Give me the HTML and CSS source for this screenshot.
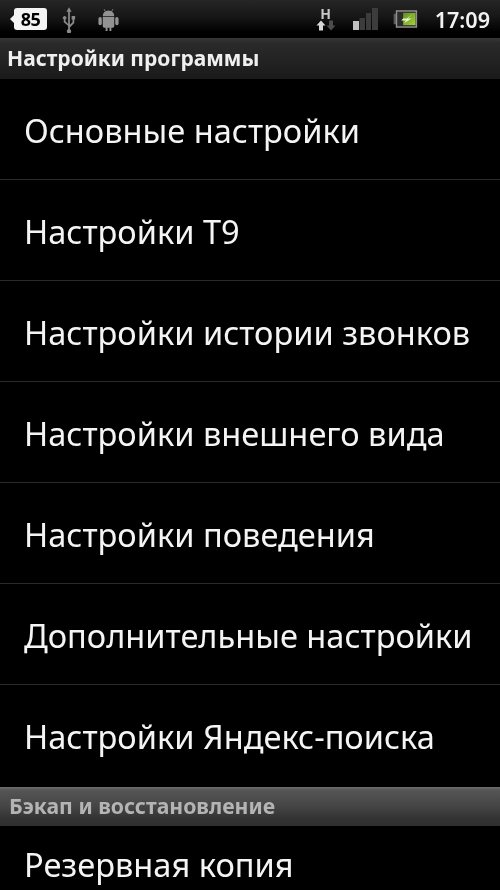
FILE: index.html
```html
<!DOCTYPE html>
<html lang="ru">
<head>
<meta charset="utf-8">
<title>Настройки программы</title>
<link rel="stylesheet" href="styles.css">
</head>
<body>
<div class="screen">
  <header class="status">
    <div class="status-left">
      <span class="sms-badge">85</span>
      <svg class="ico-usb" width="14" height="27" viewBox="0 0 16 28"><g fill="#8a8a8a"><path d="M8 0l3 5H9v15l3-3v-3h-1v-4h4v4h-1v4l-5 5v2.200a2.500 2.500 0 1 1-2 0V21L2 17v-3.200a2 2 0 1 1 2 0V16l3 3V5H5z"/></g></svg>
      <svg class="ico-android" width="23" height="23" viewBox="0 0 24 24"><g fill="#929292"><path d="M6 8.500a6 6 0 0 1 12 0z"/><path d="M6 9.500h12V19a1.500 1.500 0 0 1-1.500 1.500H15V24h-2v-3.500h-2V24H9v-3.500H7.500A1.500 1.500 0 0 1 6 19z"/><rect x="1.500" y="9.500" width="3.500" height="8.500" rx="1.700"/><rect x="19" y="9.500" width="3.500" height="8.500" rx="1.700"/><path d="M7.500 1l2 3-.6.4-2-3zM16.500 1l-2 3 .6.4 2-3z"/></g></svg>
    </div>
    <div class="status-right">
      <div class="net"><span class="net-h">H</span>
        <svg width="20" height="11" viewBox="0 0 20 10"><path d="M5 0l4.500 5H7v5H3V5H.5z" fill="#d8d8d8"/><path d="M15 10l4.500-5H17V0h-4v5h-2.500z" fill="#4c4c4c"/></svg>
      </div>
      <svg class="ico-signal" width="25" height="22" viewBox="0 0 25 22"><rect x="0" y="13" width="6" height="9" fill="#c0c0c0"/><rect x="6.500" y="10" width="5.500" height="12" fill="#3c3c3c"/><rect x="13" y="5" width="5" height="17" fill="#3c3c3c"/><rect x="19" y="0" width="6" height="22" fill="#3c3c3c"/></svg>
      <svg class="ico-batt" width="25" height="18" viewBox="0 0 25 19"><rect x="0" y="4" width="3" height="11" fill="#5a5a5a"/><rect x="3" y="1" width="21" height="17" fill="#2c2c2c" stroke="#909090" stroke-width="1.500"/><defs><linearGradient id="g" x1="0" x2="1" y1="0" y2="1"><stop offset="0" stop-color="#5f8f1e"/><stop offset="1" stop-color="#a6d23c"/></linearGradient></defs><rect x="10" y="3" width="13" height="13" fill="url(#g)"/><path d="M20 4l-6 5H10l-2 2h5l-2 3 8-5h-4z" fill="#e6f4c8"/></svg>
      <span class="clock">17:09</span>
    </div>
  </header>
  <div class="titlebar">Настройки программы</div>
  <ul class="list">
    <li class="row">Основные настройки</li>
    <li class="row">Настройки Т9</li>
    <li class="row">Настройки истории звонков</li>
    <li class="row">Настройки внешнего вида</li>
    <li class="row">Настройки поведения</li>
    <li class="row">Дополнительные настройки</li>
    <li class="row">Настройки Яндекс-поиска</li>
  </ul>
  <div class="section">Бэкап и восстановление</div>
  <div class="row last">Резервная копия</div>
</div>
</body>
</html>
```
FILE: styles.css
```css
* { box-sizing: border-box; }
html, body { margin: 0; padding: 0; background: #000; }
.screen {
  width: 500px; height: 890px; overflow: hidden; background: #000;
  font-family: "Noto Sans", "Open Sans", sans-serif; color: #fff;
  filter: blur(.45px);
}
.status {
  height: 38px; display: flex; justify-content: space-between; align-items: center;
  background: linear-gradient(#262626 0, #161616 45%, #000 85%);
  padding: 0 10px 0 14px;
}
.status-left, .status-right { display: flex; align-items: center; }
.sms-badge {
  width: 33px; height: 22px; background: #f4f4f4; color: #000; border-radius: 3px;
  font-size: 18px; font-weight: 700; line-height: 22px; text-align: center;
  position: relative; letter-spacing: -.5px;
}
.sms-badge::before {
  content: ""; position: absolute; left: -4px; top: 7px;
  border-style: solid; border-width: 4px 4px 4px 0; border-color: transparent #f4f4f4 transparent transparent;
}
.ico-usb { margin-left: 15px; }
.ico-android { margin-left: 21px; }
.net { width: 20px; display: flex; flex-direction: column; align-items: center; }
.net-h { font-size: 14px; font-weight: 700; line-height: 12px; color: #c8c8c8; }
.ico-signal { margin-left: 17px; }
.ico-batt { margin-left: 15px; }
.clock { margin-left: 17px; font-size: 21.600px; font-weight: 600; color: #f2f2f2; }
.titlebar {
  height: 41px; padding-left: 7px; font-size: 21px; font-weight: 700; line-height: 41px;
  color: #f0f0f0; background: linear-gradient(#383838 0, #2a2a2a 12%, #222 60%, #1a1a1a 100%);
}
.list { margin: 0; padding: 0; list-style: none; }
.row {
  height: 101px; padding: 2px 0 0 24px; font-size: 32.600px; line-height: 99px;
  border-bottom: 1px solid #2a2a2a; color: #f4f4f4; white-space: nowrap;
}
.list .row:last-child { height: 102px; border-bottom: 0; }
.section {
  height: 39px; padding-left: 9px; font-size: 21.200px; font-weight: 700; line-height: 38px; color: #b4b4b4;
  background: linear-gradient(#6e6e6e 0, #555 8%, #454545 50%, #333 80%, #2f2f2f 100%);
}
.row.last { height: 64px; padding-top: 0; line-height: 77px; border-bottom: 0; }
```
